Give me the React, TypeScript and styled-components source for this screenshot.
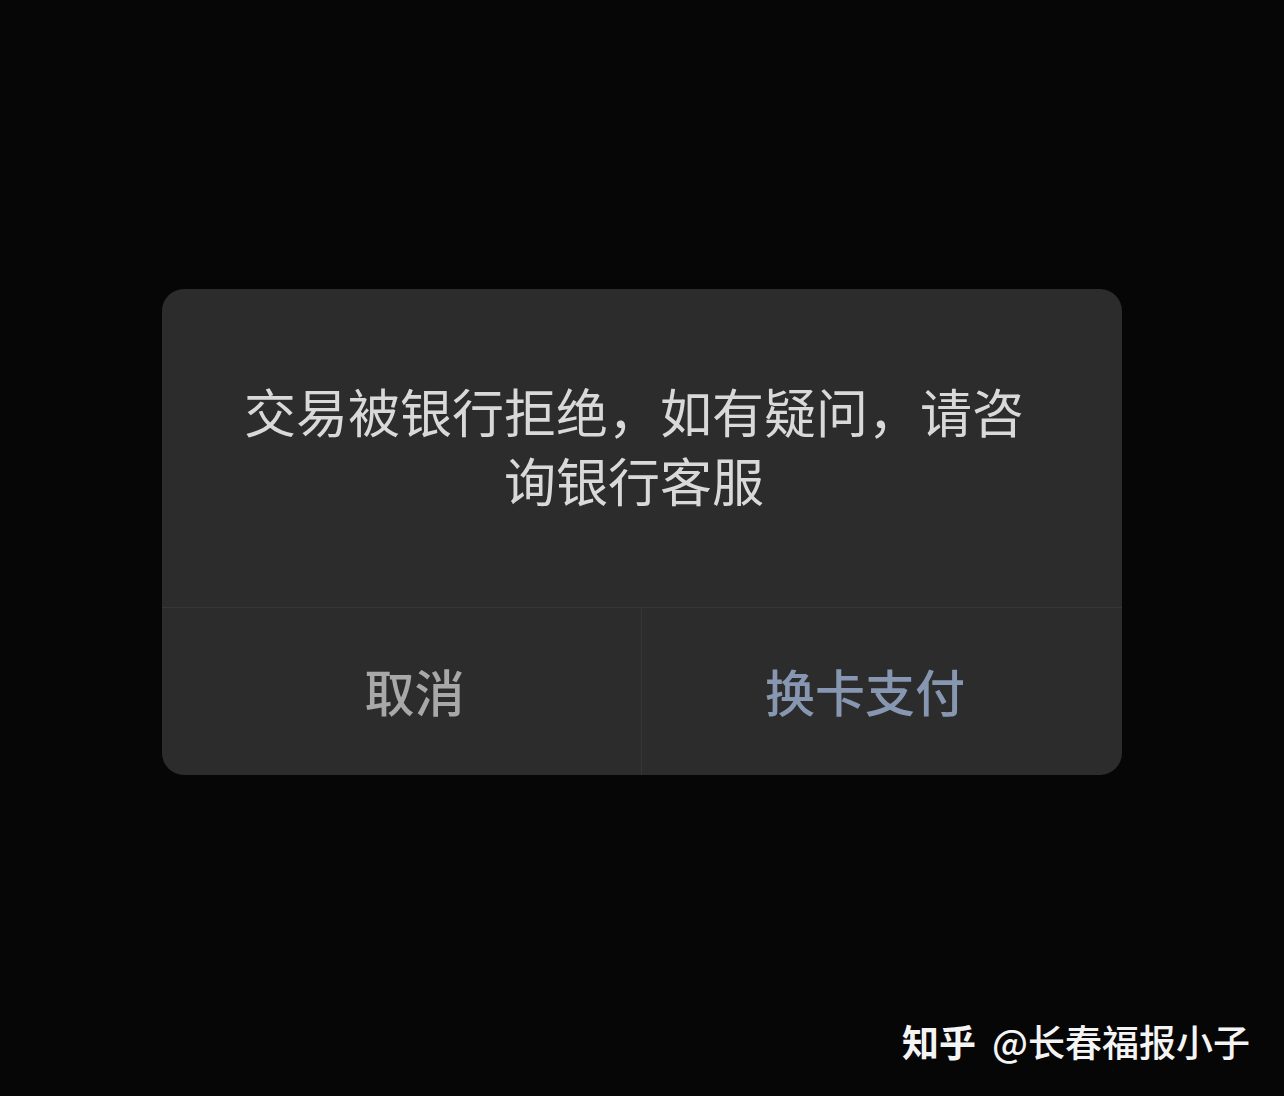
import styled, {createGlobalStyle} from "styled-components";


const GlobalStyle = createGlobalStyle`
    html, body {
        margin: 0;
        padding: 0;
        background: #060606;
    }
    body {
        font-family: "Noto Sans CJK SC", "Noto Sans", sans-serif;
    }
`

interface ActionProps{
    accent?: boolean;
}


function App (){

    return(
        <>
            <GlobalStyle/>
            <Screen>
                <Dialog>
                    <MessageBox>
                        <MessageText>
                            交易被银行拒绝，如有疑问，请咨<br/>
                            询银行客服
                        </MessageText>
                    </MessageBox>
                    <ActionRow>
                        <ActionButton>取消</ActionButton>
                        <ActionButton accent>换卡支付</ActionButton>
                    </ActionRow>
                </Dialog>
                <Watermark>
                    <WatermarkBrand>知乎</WatermarkBrand>@长春福报小子
                </Watermark>
            </Screen>
        </>
    )
}


const Screen = styled.div`
    position: relative;
    width: 1284px;
    height: 1096px;
    box-sizing: border-box;
    padding-top: 289px;
    display: flex;
    flex-direction: column;
    align-items: center;
    background: #060606;
    overflow: hidden;
`

const Dialog = styled.div`
    width: 960px;
    height: 486px;
    background: #2c2c2c;
    border-radius: 22px;
    display: flex;
    flex-direction: column;
    overflow: hidden;
`

const MessageBox = styled.div`
    height: 319px;
    padding: 0 16px 6px 0;
    display: flex;
    align-items: center;
    justify-content: center;
    border-bottom: 1px solid #363636;
    box-sizing: border-box;
`

const MessageText = styled.p`
    margin: 0;
    text-align: center;
    font-size: 52px;
    line-height: 69px;
    font-weight: 400;
    color: #d9d9d9;
`

const ActionRow = styled.div`
    flex: 1;
    display: grid;
    grid-template-columns: 480px 1fr;
`

const ActionButton = styled.button<ActionProps>`
    border: none;
    background: transparent;
    padding: 0 0 4px 0;
    padding-left: ${({accent}) => accent ? "0" : "26px"};
    padding-right: ${({accent}) => accent ? "34px" : "0"};
    font-family: "Noto Sans CJK SC", "Noto Sans", sans-serif;
    font-size: 50px;
    font-weight: 500;
    color: ${({accent}) => accent ? "#8797b1" : "#a8a8a8"};
    border-right: ${({accent}) => accent ? "none" : "1px solid #363636"};
    cursor: pointer;
`

const Watermark = styled.div`
    position: absolute;
    right: 34px;
    bottom: 30px;
    display: flex;
    align-items: center;
    font-size: 37px;
    font-weight: 500;
    color: #f4f4f4;
    line-height: 50px;
    white-space: nowrap;
`

const WatermarkBrand = styled.span`
    font-weight: 700;
    margin-right: 16px;
`


export default App;
